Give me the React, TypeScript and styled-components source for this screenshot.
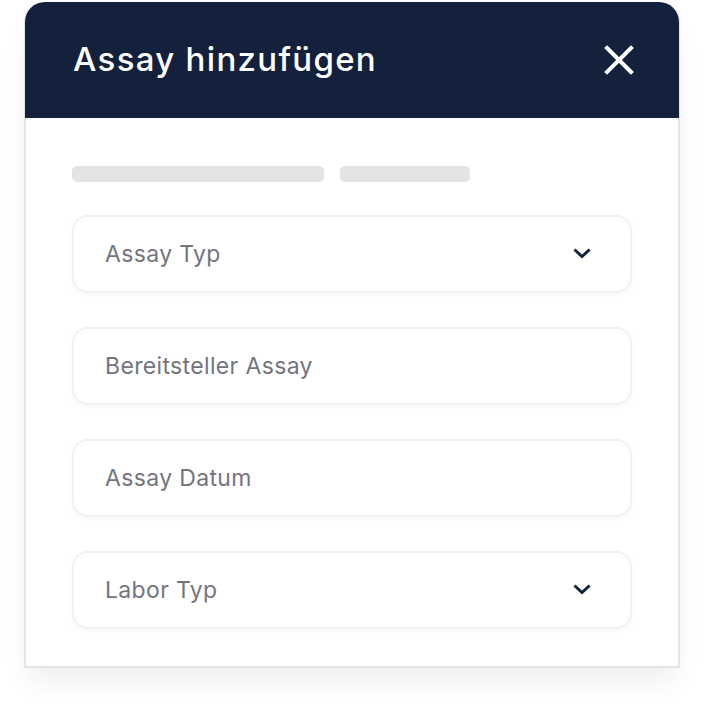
import React from 'react';
import styled, { createGlobalStyle } from 'styled-components';

const GlobalStyle = createGlobalStyle`
  html, body {
    margin: 0;
    padding: 0;
    background: #ffffff;
    font-family: Inter, "Noto Sans", sans-serif;
  }
`;

const Page = styled.div`
  width: 704px;
  height: 716px;
  padding: 2px 25px 0 25px;
  box-sizing: border-box;
`;

const Card = styled.div`
  width: 654px;
  border-radius: 20px 20px 0 0;
  background: #ffffff;
  box-shadow: 0 1px 0 1px #e4e4e7, 0 20px 30px -6px rgba(0, 0, 0, 0.08);
  overflow: hidden;
`;

const Header = styled.div`
  height: 116px;
  background: #13213d;
  display: flex;
  align-items: center;
  justify-content: space-between;
  padding: 0 45px 0 48px;
`;

const Title = styled.h1`
  margin: 0 0 3px 0;
  color: #ffffff;
  font-size: 33px;
  font-weight: 500;
  letter-spacing: 1.3px;
`;

const CloseButton = styled.button`
  border: 0;
  background: none;
  padding: 0;
  width: 30px;
  height: 30px;
  display: flex;
  align-items: center;
  justify-content: center;
  cursor: pointer;
`;

const Body = styled.div`
  padding: 48px 46px 37px 46px;
  border-left: 1px solid #e4e4e7;
  border-right: 1px solid #e4e4e7;
  display: flex;
  flex-direction: column;
`;

const SkeletonRow = styled.div`
  display: flex;
  gap: 16px;
  margin-bottom: 33px;
`;

const Skeleton = styled.div<{ $w: number }>`
  width: ${p => p.$w}px;
  height: 16px;
  border-radius: 5px;
  background: #e4e4e7;
`;

const Fields = styled.div`
  display: flex;
  flex-direction: column;
  gap: 34px;
`;

const Field = styled.div`
  height: 78px;
  box-sizing: border-box;
  border: 2px solid #eef2f8;
  border-radius: 16px;
  display: flex;
  align-items: center;
  justify-content: space-between;
  padding: 0 39px 0 31px;
  box-shadow: 0 2px 6px rgba(15, 23, 42, 0.03);
`;

const Placeholder = styled.span`
  color: #74747e;
  font-size: 23px;
  font-weight: 400;
  letter-spacing: 0.35px;
`;

const Chevron = () => (
  <svg width="18" height="12" viewBox="0 0 18 12" fill="none">
    <path d="M2.5 2.5 L9 8.5 L15.5 2.5" stroke="#13213d" strokeWidth="3" strokeLinecap="square" />
  </svg>
);

const CloseIcon = () => (
  <svg width="30" height="30" viewBox="0 0 30 30" fill="none">
    <path d="M3 3 L27 27 M27 3 L3 27" stroke="#ffffff" strokeWidth="4" strokeLinecap="square" />
  </svg>
);

const fields = [
  { label: 'Assay Typ', select: true },
  { label: 'Bereitsteller Assay', select: false },
  { label: 'Assay Datum', select: false },
  { label: 'Labor Typ', select: true },
];

export default function App() {
  return (
    <>
      <GlobalStyle />
      <Page>
        <Card>
          <Header>
            <Title>Assay hinzufügen</Title>
            <CloseButton aria-label="Schließen">
              <CloseIcon />
            </CloseButton>
          </Header>
          <Body>
            <SkeletonRow>
              <Skeleton $w={252} />
              <Skeleton $w={130} />
            </SkeletonRow>
            <Fields>
              {fields.map(f => (
                <Field key={f.label}>
                  <Placeholder>{f.label}</Placeholder>
                  {f.select && <Chevron />}
                </Field>
              ))}
            </Fields>
          </Body>
        </Card>
      </Page>
    </>
  );
}
